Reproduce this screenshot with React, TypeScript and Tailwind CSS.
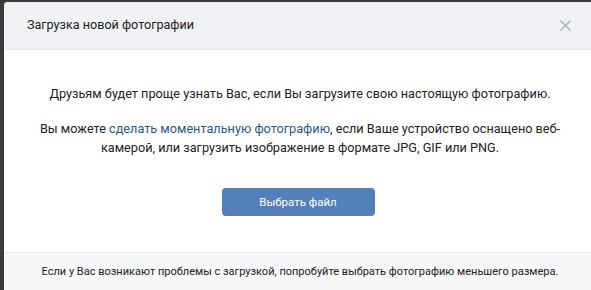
export default function App() {
  return (
    <div className="h-[290px] w-[591px] overflow-hidden bg-[#3b3b3b] pt-[2px] pl-[4px] font-['Roboto',sans-serif] text-[#000]">
      <div className="w-[592px] rounded-t-[4px] overflow-hidden bg-white">
        {/* header */}
        <div className="flex h-[48px] items-center justify-between border-b border-[#e7e8ec] bg-[#f0f2f5] pl-[23px] pr-[25px]">
          <span className="text-[12.6px] text-[#222]">Загрузка новой фотографии</span>
          <svg width="11" height="11" viewBox="0 0 12 12" className="text-[#a5b0bd]">
            <path d="M1 1l10 10M11 1L1 11" stroke="currentColor" strokeWidth="1.6" strokeLinecap="round" />
          </svg>
        </div>

        {/* body */}
        <div className="flex flex-col items-center px-[30px] pt-[34px] pb-[36px] text-center text-[12.7px] leading-[19px] text-[#222]">
          <p>Друзьям будет проще узнать Вас, если Вы загрузите свою настоящую фотографию.</p>
          <p className="mt-[16px] max-w-[525px]">
            Вы можете <a className="text-[#2a5885]">сделать моментальную фотографию</a>, если Ваше устройство оснащено веб-камерой, или загрузить изображение в формате JPG, GIF или PNG.
          </p>
          <button className="mt-[31px] mr-[4px] h-[28px] w-[153px] rounded-[4px] bg-[#5181b8] text-[11.5px] text-white">
            Выбрать файл
          </button>
        </div>

        {/* footer */}
        <div className="h-[40px] border-t border-[#e7e8ec] bg-[#f7f8fa] pt-[11px] text-center text-[11px] text-[#222]">
          Если у Вас возникают проблемы с загрузкой, попробуйте выбрать фотографию меньшего размера.
        </div>
      </div>
    </div>
  );
}
